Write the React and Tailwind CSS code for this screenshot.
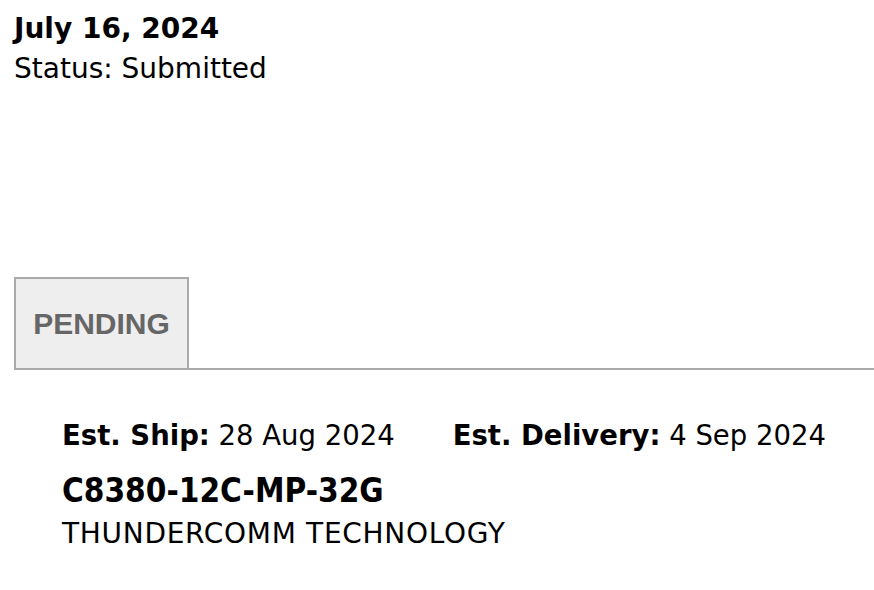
export default function App() {
  return (
    <div className="min-h-screen bg-white text-black" style={{ fontFamily: '"DejaVu Sans", sans-serif' }}>
      {/* Order header */}
      <div className="px-[14px] pt-[10px]">
        <p className="text-[28px] font-bold leading-[38px]">July 16, 2024</p>
        <p className="text-[28px] leading-[42px]">Status: Submitted</p>
      </div>

      {/* Tabs */}
      <div className="mt-[187px] ml-[14px] flex border-b-2 border-[#aaa]">
        <div className="w-[175px] h-[93px] -mb-[2px] border-2 border-[#aaa] bg-[#eee] flex items-center justify-center">
          <span className="text-[30px] font-bold text-[#666]" style={{ fontFamily: '"Liberation Sans", Arial, sans-serif' }}>
            PENDING
          </span>
        </div>
      </div>

      {/* Line item */}
      <div className="px-[62px] pt-[49px]">
        <div className="flex gap-[58px] text-[27.5px] leading-[32px] whitespace-nowrap">
          <p className="shrink-0">
            <span className="font-bold">Est. Ship:</span> 28 Aug 2024
          </p>
          <p className="shrink-0">
            <span className="font-bold">Est. Delivery:</span> 4 Sep 2024
          </p>
        </div>
        <p
          className="mt-[21px] text-[33px] font-bold leading-[38px] whitespace-nowrap"
          style={{ fontFamily: '"DejaVu Sans Condensed", "Noto Sans", sans-serif' }}
        >
          C8380-12C-MP-32G
        </p>
        <p className="mt-[4px] text-[28px] leading-[40px] tracking-[0.7px] whitespace-nowrap">THUNDERCOMM TECHNOLOGY</p>
      </div>
    </div>
  );
}
